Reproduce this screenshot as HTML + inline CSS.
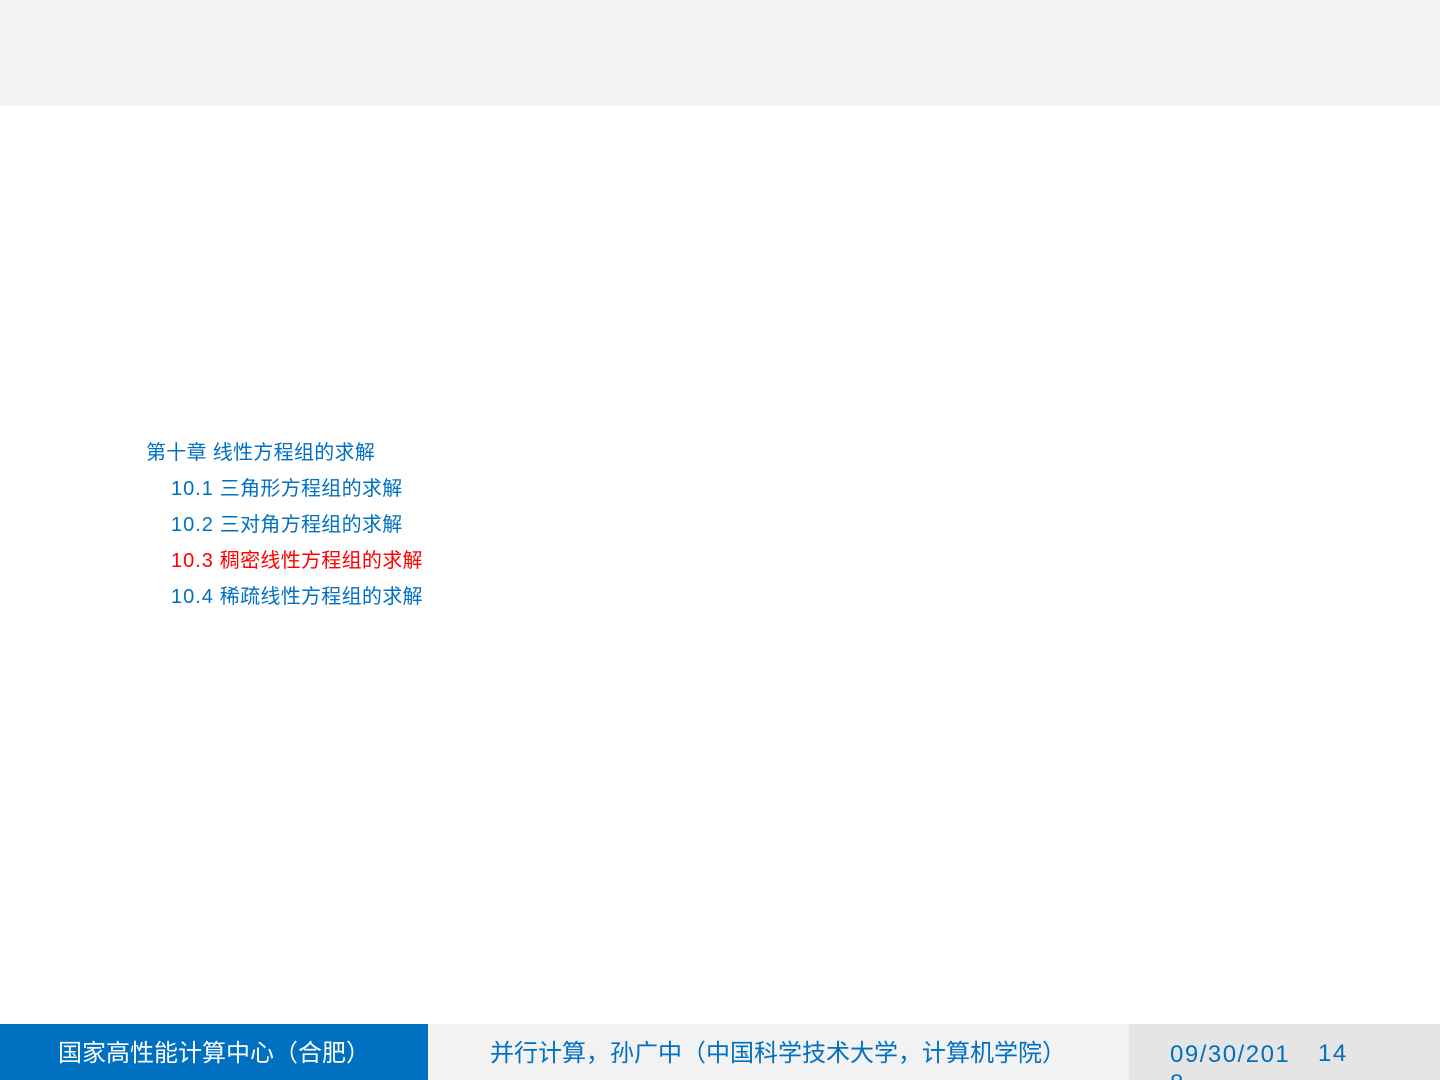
<!DOCTYPE html>
<html><head><meta charset="utf-8"><style>
html,body{margin:0;width:1440px;height:1080px;overflow:hidden}
body{position:relative;background:#fff;font-family:"Liberation Sans","Noto Sans CJK SC",sans-serif}
.top{position:absolute;left:0;top:0;width:1440px;height:106px;background:#f2f2f2}
.t{position:absolute;font-size:20px;line-height:24px;color:#0070c0;white-space:nowrap;letter-spacing:0.3px}
.n{letter-spacing:1px}
.f{position:absolute;top:1024px;height:56px;overflow:hidden}
.ft{position:absolute;top:16px;font-size:24px;line-height:28px;white-space:nowrap}
</style></head><body>
<div class="top"></div>
<div class="t" style="left:146px;top:441px">第十章 线性方程组的求解</div>
<div class="t" style="left:171px;top:477px"><span class="n">10.1</span> 三角形方程组的求解</div>
<div class="t" style="left:171px;top:513px"><span class="n">10.2</span> 三对角方程组的求解</div>
<div class="t" style="left:171px;top:549px;color:#ff0000"><span class="n">10.3</span> 稠密线性方程组的求解</div>
<div class="t" style="left:171px;top:585px"><span class="n">10.4</span> 稀疏线性方程组的求解</div>
<div class="f" style="left:0;width:428px;background:#0070c0"><div class="ft" style="left:58px;color:#fff">国家高性能计算中心（合肥）</div></div>
<div class="f" style="left:428px;width:701px;background:#f2f2f2"><div class="ft" style="left:62px;color:#0070c0">并行计算，孙广中（中国科学技术大学，计算机学院）</div></div>
<div class="f" style="left:1129px;width:311px;background:#e5e5e5">
<div class="ft" style="left:41px;color:#0070c0;line-height:29px;letter-spacing:1.5px">09/30/201<br>8</div>
<div class="ft" style="left:189px;color:#0070c0;letter-spacing:1.5px">14</div>
</div>
</body></html>
